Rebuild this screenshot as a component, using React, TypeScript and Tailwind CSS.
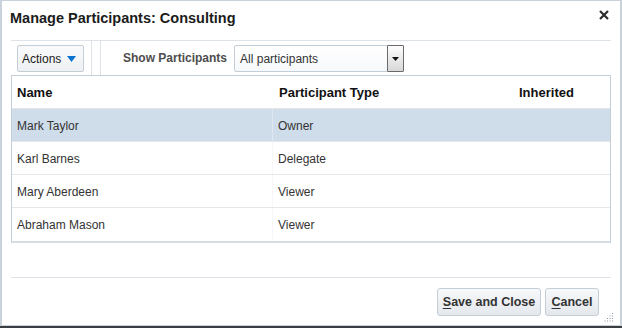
import React from "react";

const rows = [
  { name: "Mark Taylor", type: "Owner", selected: true },
  { name: "Karl Barnes", type: "Delegate" },
  { name: "Mary Aberdeen", type: "Viewer" },
  { name: "Abraham Mason", type: "Viewer" },
];

function Grip() {
  const dots: [number, number][] = [];
  for (let r = 0; r < 4; r++) {
    for (let c = 0; c <= r; c++) {
      dots.push([9 - c * 2.5, 2 + r * 2.5]);
    }
  }
  return (
    <svg width="12" height="12" viewBox="0 0 12 12" className="absolute right-[5px] bottom-[2px]">
      {dots.map(([x, y], i) => (
        <rect key={i} x={x} y={y} width="1" height="1" fill="#8a96a3" />
      ))}
    </svg>
  );
}

export default function App() {
  return (
    <div className="w-[622px] h-[328px] bg-[#3b3f44] overflow-hidden" style={{ fontFamily: '"Liberation Sans", Arial, sans-serif' }}>
      <div className="relative w-[622px] h-[326px] bg-white border-x-2 border-t border-b border-[#c9d2db] flex flex-col px-[9px]">
        {/* Title */}
        <div className="h-[40px] flex items-start justify-between pt-[7px] border-b border-[#dde3e8]">
          <div className="text-[14.5px] font-bold text-[#1b1b1b] -ml-px">Manage Participants: Consulting</div>
          <div className="mr-[2px] mt-[2px]">
            <svg width="10" height="10" viewBox="0 0 10 10">
              <path d="M1 1 L9 9 M9 1 L1 9" stroke="#2b2b2b" strokeWidth="2.2" />
            </svg>
          </div>
        </div>
        {/* Toolbar */}
        <div className="h-[34px] flex items-center">
          <div className="pl-[6px] pr-[7px] flex items-center h-full pt-px">
            <button className="h-[27px] w-[67px] rounded-[2px] border border-[#c4ced7] bg-gradient-to-b from-[#f9fafb] to-[#eef1f4] flex items-center pl-[4px] text-[12px] text-[#1b1b1b]">
              Actions
              <svg width="9" height="6" viewBox="0 0 9 6" className="ml-[6px] mt-[1px]">
                <path d="M0 0 L9 0 L4.5 6 Z" fill="#0a73cf" />
              </svg>
            </button>
          </div>
          <div className="w-px h-full bg-[#dde3e8]" />
          <div className="w-[8px]" />
          <div className="w-px h-full bg-[#dde3e8]" />
          <div className="pl-[22px] text-[12px] font-bold text-[#4d4d4d]">Show Participants</div>
          <div className="ml-[7px] mt-px h-[27px] w-[170px] border border-[#c4ced7] rounded-[2px] bg-gradient-to-b from-white to-[#f6f8fa] flex items-center justify-between">
            <span className="pl-[5px] text-[12px] text-[#333]">All participants</span>
            <div className="w-[17px] h-[27px] -mr-px border border-[#6b6b6b] rounded-[1px] bg-gradient-to-b from-[#fdfdfd] to-[#d8d8d8] flex items-center justify-center">
              <svg width="7" height="4" viewBox="0 0 7 4">
                <path d="M0 0 L7 0 L3.5 4 Z" fill="#111" />
              </svg>
            </div>
          </div>
        </div>
        {/* Table */}
        <div className="border border-[#c4ced7] border-b-2 border-b-[#d5dce3]">
          <div className="h-[33px] flex items-center pt-px text-[13px] font-bold text-[#111] border-b border-[#e3e6e9]">
            <div className="w-[261px] pl-[5px]">Name</div>
            <div className="w-[240px] pl-[6px]">Participant Type</div>
            <div className="pl-[6px]">Inherited</div>
          </div>
          {rows.map((r, i) => (
            <div
              key={r.name}
              className={`h-[33px] flex items-stretch text-[12px] text-[#333] ${i < rows.length - 1 ? "border-b border-[#e5e8eb]" : ""} ${r.selected ? "bg-[#cfdcea]" : "bg-white"}`}
            >
              <div className={`w-[261px] pl-[5px] pt-px flex items-center border-r ${r.selected ? "border-[#dfe7f0]" : "border-[#f6f7f8]"}`}>{r.name}</div>
              <div className="w-[240px] pl-[5px] pt-px flex items-center">{r.type}</div>
              <div className="flex-1" />
            </div>
          ))}
        </div>
        <div className="h-[35px] border-b border-[#dde3e8]" />
        {/* Footer */}
        <div className="flex justify-end gap-[4px] pt-[10px] pr-[12px]">
          <button className="h-[28px] w-[104px] rounded-[3px] border border-[#c4ced7] bg-gradient-to-b from-[#f7f8fa] to-[#e4e8ec] text-[12.5px] font-bold text-[#333]">
            <span className="underline underline-offset-2">S</span>ave and Close
          </button>
          <button className="h-[28px] w-[54px] rounded-[3px] border border-[#c4ced7] bg-gradient-to-b from-[#f7f8fa] to-[#e4e8ec] text-[12.5px] font-bold text-[#333]">
            <span className="underline underline-offset-2">C</span>ancel
          </button>
        </div>
        <Grip />
      </div>
    </div>
  );
}
